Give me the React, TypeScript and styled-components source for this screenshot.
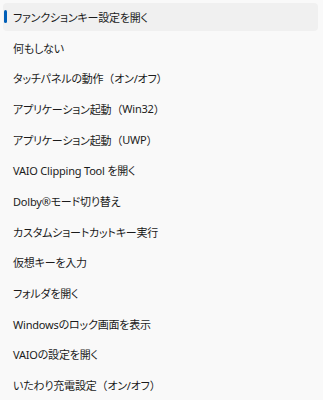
import React, { FC, ReactElement } from 'react';
import styled, { createGlobalStyle } from 'styled-components';

const GlobalStyle = createGlobalStyle`
html, body {
  margin: 0;
  padding: 0;
  background: #f9f9f9;
}
`;

const Menu = styled.ul`
width: 323px;
height: 400px;
box-sizing: border-box;
margin: 0;
padding: 3px 5px 0 3px;
list-style: none;
display: flex;
flex-direction: column;
gap: 2.67px;
background: #f9f9f9;
overflow: hidden;
font-family: 'Noto Sans', 'Noto Sans CJK JP', sans-serif;
font-feature-settings: 'palt';
font-size: 11px;
letter-spacing: -0.2px;
color: #1b1b1b;`;

const Item = styled.li<{ $selected?: boolean }>`
position: relative;
height: 28px;
flex: none;
display: flex;
align-items: center;
padding-left: 10px;
border-radius: 4px;
background: ${p => (p.$selected ? '#f0f0f0' : 'transparent')};
white-space: nowrap;`;

// full-width brackets keep their normal width, like the original font
const Bracket = styled.span`
font-feature-settings: normal;`;

const Accent = styled.span`
position: absolute;
left: 1px;
top: 7px;
width: 3px;
height: 13px;
border-radius: 2px;
background: #005fb8;`;

const items = [
  'ファンクションキー設定を開く',
  '何もしない',
  'タッチパネルの動作（オン/オフ）',
  'アプリケーション起動（Win32）',
  'アプリケーション起動（UWP）',
  'VAIO Clipping Tool を開く',
  'Dolby®モード切り替え',
  'カスタムショートカットキー実行',
  '仮想キーを入力',
  'フォルダを開く',
  'Windowsのロック画面を表示',
  'VAIOの設定を開く',
  'いたわり充電設定（オン/オフ）',
];

const renderLabel = (label: string) =>
  label.split(/([（）])/).map((part, i) =>
    part === '（' || part === '）' ? <Bracket key={i}>{part}</Bracket> : part
  );

const App: FC = (): ReactElement => {
  return (
    <>
      <GlobalStyle />
      <Menu>
        {items.map((label, i) => (
          <Item key={label} $selected={i === 0}>
            {i === 0 && <Accent />}
            {renderLabel(label)}
          </Item>
        ))}
      </Menu>
    </>
  );
};

export default App;
